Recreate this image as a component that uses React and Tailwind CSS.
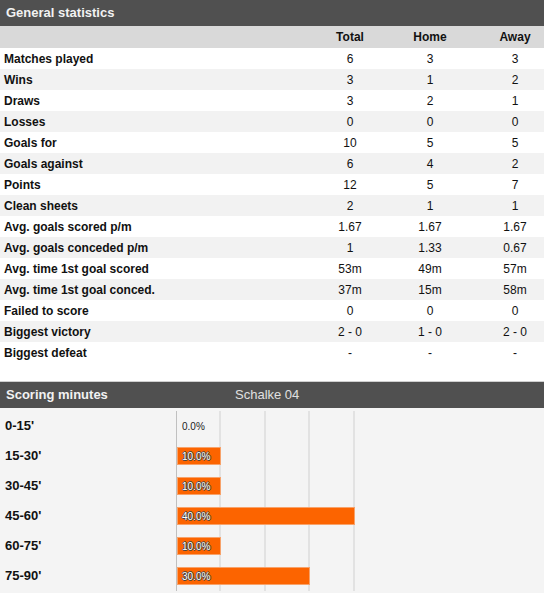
import React from 'react';

const stats = [
  ['Matches played', '6', '3', '3'],
  ['Wins', '3', '1', '2'],
  ['Draws', '3', '2', '1'],
  ['Losses', '0', '0', '0'],
  ['Goals for', '10', '5', '5'],
  ['Goals against', '6', '4', '2'],
  ['Points', '12', '5', '7'],
  ['Clean sheets', '2', '1', '1'],
  ['Avg. goals scored p/m', '1.67', '1.67', '1.67'],
  ['Avg. goals conceded p/m', '1', '1.33', '0.67'],
  ['Avg. time 1st goal scored', '53m', '49m', '57m'],
  ['Avg. time 1st goal conced.', '37m', '15m', '58m'],
  ['Failed to score', '0', '0', '0'],
  ['Biggest victory', '2 - 0', '1 - 0', '2 - 0'],
  ['Biggest defeat', '-', '-', '-'],
];

const minutes = [
  ["0-15'", 0],
  ["15-30'", 10],
  ["30-45'", 10],
  ["45-60'", 40],
  ["60-75'", 10],
  ["75-90'", 30],
];

const App = () => {
  return (
    <div className="w-[544px] min-h-[593px] bg-white font-['Liberation_Sans',Arial,sans-serif] text-[12px] text-[#111] overflow-hidden">
      {/* General statistics */}
      <div className="h-[26px] bg-[#505050] flex items-center pl-[6px]">
        <span className="text-[13px] font-bold text-[#f2f2f2]">General statistics</span>
      </div>
      <div className="grid grid-cols-[1fr_80px_80px_74px] h-[22px] items-center bg-[#d9d9d9] font-bold">
        <span></span>
        <span className="text-center">Total</span>
        <span className="text-center">Home</span>
        <span className="text-center pl-4">Away</span>
      </div>
      {stats.map((row, i) => (
        <div
          key={row[0]}
          className={`grid grid-cols-[1fr_80px_80px_74px] h-[21px] items-center ${i % 2 === 1 ? 'bg-[#f2f2f2]' : 'bg-white'}`}
        >
          <span className="pl-[4px] font-bold">{row[0]}</span>
          <span className="text-center">{row[1]}</span>
          <span className="text-center">{row[2]}</span>
          <span className="text-center pl-4">{row[3]}</span>
        </div>
      ))}

      <div className="h-[18px]"></div>

      {/* Scoring minutes */}
      <div className="border-t border-[#cfcfcf] h-[27px] bg-[#505050] flex items-center pl-[6px]">
        <span className="text-[13px] font-bold text-[#f2f2f2] w-[229px]">Scoring minutes</span>
        <span className="text-[13px] text-[#e0e0e0]">Schalke 04</span>
      </div>
      <div className="bg-[#f4f4f4] pt-[3px] pb-[4px]">
        <div className="flex">
          <div className="w-[176px] shrink-0">
            {minutes.map(([label]) => (
              <div key={label} className="h-[30px] flex items-center pl-[5px] text-[13px] font-bold">
                {label}
              </div>
            ))}
          </div>
          <div className="relative flex-1 border-l border-[#c0c0c0]">
            {/* grid lines */}
            <div className="absolute inset-y-0 left-0 flex">
              <div className="w-[44px] border-r-2 border-[#e2e2e2]"></div>
              <div className="w-[45px] border-r-2 border-[#e2e2e2]"></div>
              <div className="w-[44px] border-r-2 border-[#e2e2e2]"></div>
              <div className="w-[45px] border-r-2 border-[#e2e2e2]"></div>
            </div>
            {minutes.map(([label, pct]) => (
              <div key={label} className="relative h-[30px] flex items-center">
                {pct > 0 ? (
                  <div
                    className="h-[18px] bg-[#fc6400] border border-[#f7a26a] flex items-center pl-[4px] text-[10px] text-white [text-shadow:1px_0_0_#444,-1px_0_0_#444,0_1px_0_#444,0_-1px_0_#444]"
                    style={{ width: `${pct * 4.44}px` }}
                  >
                    {pct.toFixed(1)}%
                  </div>
                ) : (
                  <span className="pl-[5px] text-[10px] text-[#222]">{pct.toFixed(1)}%</span>
                )}
              </div>
            ))}
          </div>
        </div>
      </div>
    </div>
  );
};

export default App;
